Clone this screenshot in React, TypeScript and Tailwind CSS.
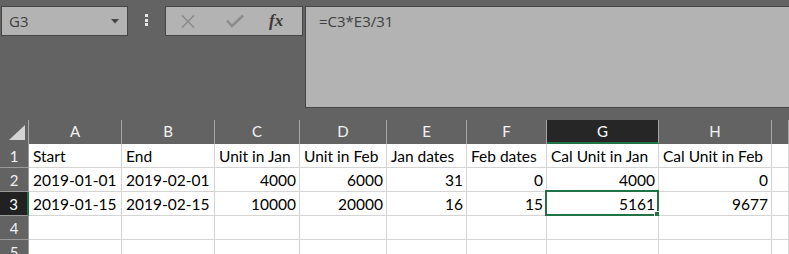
import React from "react";

const cols = [
    { key: "A", w: "w-[93px]" },
    { key: "B", w: "w-[93px]" },
    { key: "C", w: "w-[85px]" },
    { key: "D", w: "w-[87px]" },
    { key: "E", w: "w-[80px]" },
    { key: "F", w: "w-[80px]" },
    { key: "G", w: "w-[112px]" },
    { key: "H", w: "w-[113px]" },
    { key: "I", w: "w-[17px]" },
];

type Cell = { v: string; num?: boolean };

const rows: Cell[][] = [
    [
        { v: "Start" },
        { v: "End" },
        { v: "Unit in Jan" },
        { v: "Unit in Feb" },
        { v: "Jan dates" },
        { v: "Feb dates" },
        { v: "Cal Unit in Jan" },
        { v: "Cal Unit in Feb" },
        { v: "" },
    ],
    [
        { v: "2019-01-01" },
        { v: "2019-02-01" },
        { v: "4000", num: true },
        { v: "6000", num: true },
        { v: "31", num: true },
        { v: "0", num: true },
        { v: "4000", num: true },
        { v: "0", num: true },
        { v: "" },
    ],
    [
        { v: "2019-01-15" },
        { v: "2019-02-15" },
        { v: "10000", num: true },
        { v: "20000", num: true },
        { v: "16", num: true },
        { v: "15", num: true },
        { v: "5161", num: true },
        { v: "9677", num: true },
        { v: "" },
    ],
    Array.from({ length: 9 }, () => ({ v: "" })),
    Array.from({ length: 9 }, () => ({ v: "" })),
];

function FormulaBar() {
    return (
        <div className="h-[120px] flex items-start pt-[6px] font-['Open_Sans',sans-serif] text-[15px] text-[#404040]">
            {/* name box */}
            <div className="ml-px w-[127px] h-[30px] border border-[#454545] bg-[#b3b3b3] flex items-center pl-[7px] pr-[8px]">
                <span className="flex-1">G3</span>
                <svg width="8" height="5" viewBox="0 0 8 5">
                    <path d="M0 0 H8 L4 4.5 Z" fill="#444" />
                </svg>
            </div>

            <div className="ml-[17px] mt-[8px] flex flex-col gap-[1.5px]">
                <div className="w-[3px] h-[3px] bg-[#e6e6e6]" />
                <div className="w-[3px] h-[3px] bg-[#e6e6e6]" />
                <div className="w-[3px] h-[3px] bg-[#e6e6e6]" />
            </div>

            {/* cancel / enter / fx */}
            <div className="ml-[17px] w-[138px] h-[30px] border border-[#454545] bg-[#b3b3b3] flex items-center">
                <svg className="ml-[15px]" width="14" height="13" viewBox="0 0 14 13">
                    <path d="M1 0.5 L13 12.5 M13 0.5 L1 12.5" stroke="#8c8c8c" strokeWidth="1.6" />
                </svg>
                <svg className="ml-[31px]" width="18" height="14" viewBox="0 0 18 14">
                    <path d="M1 6.5 L6 12 L17 1.5" stroke="#8c8c8c" strokeWidth="2.6" fill="none" />
                </svg>
                <span className="ml-[25px] font-['Liberation_Serif',serif] italic font-bold text-[17px] text-[#3a3a3a] leading-none -mt-[2px]">
                    fx
                </span>
            </div>

            {/* formula input */}
            <div className="ml-[2px] flex-1 h-[102px] border-y border-l border-[#454545] bg-[#b3b3b3] pl-[13px] pt-[3px]">
                =C3*E3/31
            </div>
        </div>
    );
}

function Grid() {
    return (
        <div className="font-['Lato',sans-serif]">
            {/* column headers */}
            <div className="flex h-[24px]">
                <div className="w-[29px] h-full border-r border-[#a6a6a6] flex items-end justify-end pr-[3px] pb-[4px]">
                    <svg width="16" height="15" viewBox="0 0 16 15">
                        <path d="M0 15 L16 15 L16 0 Z" fill="#d4d4d4" />
                    </svg>
                </div>
                {cols.map((c) => (
                    <div
                        key={c.key}
                        className={`${c.w} h-full border-r border-[#a6a6a6] text-[15px] leading-[23px] text-center ${
                            c.key === "G"
                                ? "bg-[#262626] text-white border-b-2 border-b-[#217346]"
                                : "text-[#f2f2f2]"
                        }`}
                    >
                        {c.key === "I" ? "" : c.key}
                    </div>
                ))}
            </div>

            {rows.map((r, ri) => (
                <div key={ri} className="flex h-[24px]">
                    <div
                        className={`w-[29px] h-full border-b border-[#9a9a9a] text-[15px] leading-[23px] text-center pt-px ${
                            ri === 2
                                ? "bg-[#212121] text-white border-r-2 border-r-[#217346]"
                                : "text-[#f2f2f2] border-r border-r-[#9a9a9a]"
                        }`}
                    >
                        {ri + 1}
                    </div>
                    {r.map((cell, ci) => (
                        <div
                            key={ci}
                            className={`${cols[ci].w} relative h-full bg-white border-r border-b border-[#d4d4d4] text-[15.5px] text-black leading-[23px] pt-px whitespace-nowrap ${
                                cell.num ? "text-right pr-[3px]" : "pl-[4px]"
                            }`}
                        >
                            {cell.v}
                            {ri === 2 && ci === 6 && (
                                <>
                                    <div className="absolute -left-[2px] -top-[2px] -right-px -bottom-px border-2 border-[#217346]" />
                                    <div className="absolute -right-[3px] -bottom-[3px] w-[7px] h-[7px] bg-[#217346] border border-white" />
                                </>
                            )}
                        </div>
                    ))}
                </div>
            ))}
        </div>
    );
}

export default function App() {
    return (
        <div className="w-[789px] h-[254px] bg-[#636363] overflow-hidden">
            <FormulaBar />
            <Grid />
        </div>
    );
}
